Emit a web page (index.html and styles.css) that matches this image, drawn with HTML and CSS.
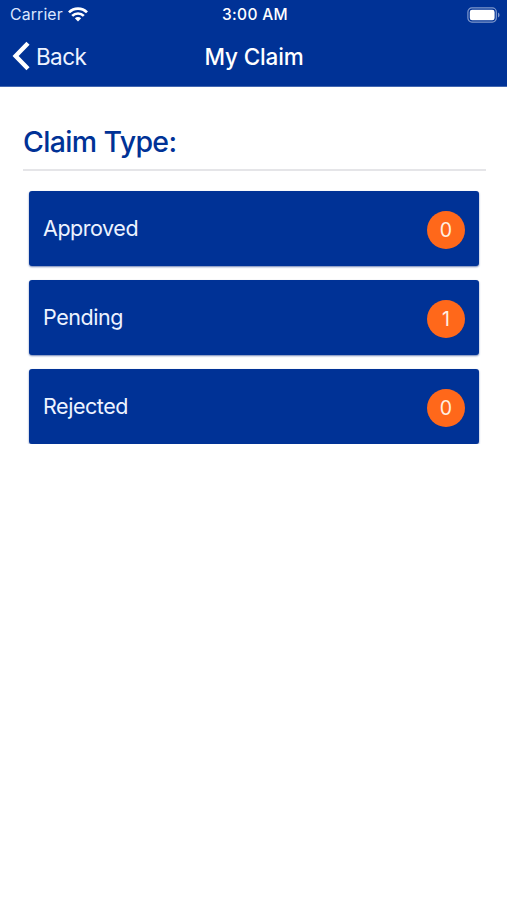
FILE: index.html
```html
<!DOCTYPE html>
<html lang="en">
<head>
<meta charset="utf-8">
<title>My Claim</title>
<link rel="stylesheet" href="styles.css">
</head>
<body>
<header class="header">
  <div class="status">
    <div class="carrier"><span class="carrier-name">Carrier</span>
      <svg class="wifi" width="20" height="15" viewBox="0 0 20 15"><g fill="none" stroke="#fff" stroke-width="2.7"><path d="M1 5.4C6 .4 14 .4 19 5.4"/><path d="M4.2 8.9C7.4 5.7 12.6 5.7 15.8 8.9"/></g><path fill="#fff" d="M6.8 11.3Q10 8.6 13.2 11.3L10 14.6Z"/></svg>
    </div>
    <time class="clock">3:00 AM</time>
    <svg class="battery" width="33" height="16" viewBox="0 0 33 16"><rect x=".9" y=".9" width="28.4" height="14.2" rx="4" fill="none" stroke="#7f98cc" stroke-width="1.2"/><rect x="2.8" y="2.8" width="24.8" height="10.4" rx="2.3" fill="#fff"/><path d="M31 5.6v4.8q1.6-.8 1.6-2.4T31 5.6Z" fill="#7f98cc"/></svg>
  </div>
  <nav class="nav">
    <a class="back"><svg class="chevron" width="18" height="30" viewBox="0 0 18 30"><path d="M16 2.2 3.6 15 16 27.8" fill="none" stroke="#fff" stroke-width="4.4"/></svg><span class="back-label">Back</span></a>
    <h1 class="title">My Claim</h1>
  </nav>
</header>
<main class="content">
  <h2 class="heading"><span>Claim Type:</span></h2>
  <ul class="list">
    <li class="card"><span class="label">Approved</span><span class="badge">0</span></li>
    <li class="card"><span class="label">Pending</span><span class="badge">1</span></li>
    <li class="card"><span class="label">Rejected</span><span class="badge">0</span></li>
  </ul>
</main>
</body>
</html>
```
FILE: styles.css
```css
* { box-sizing: border-box; }
body { margin: 0; background: #fff; font-family: Inter, "Liberation Sans", sans-serif; }
svg { display: block; flex: none; }
.header { height: 87px; background: #003296; border-bottom: 1px solid #4267b0; color: #fff; }
.status { display: grid; grid-template-columns: 1fr auto 1fr; align-items: center; height: 29px; padding: 0 7px 0 10px; }
.carrier { display: flex; align-items: center; gap: 5px; font-size: 15.8px; letter-spacing: .15px; color: #dbe6ff; }
.clock { font-size: 15.5px; font-weight: 500; letter-spacing: .35px; }
.battery { justify-self: end; }
.nav { display: grid; grid-template-columns: 1fr auto 1fr; align-items: center; height: 54px; padding: 0 11px 0 12px; }
.back { display: flex; align-items: center; gap: 6px; font-size: 22.5px; letter-spacing: -.6px; color: #edf3ff; }
.title { margin: 0; font-size: 22.5px; font-weight: 550; letter-spacing: -.15px; }
.content { padding: 35px 21px 0 23px; }
.heading { margin: 0; height: 49px; border-bottom: 2px solid #e5e5e8; color: #003296; font-size: 28.5px; line-height: 40px; font-weight: 480; letter-spacing: -.65px; }
.list { list-style: none; margin: 0; padding: 20px 7px 0 6px; display: flex; flex-direction: column; gap: 14px; }
.card { display: flex; justify-content: space-between; align-items: center; height: 75px; padding: 3px 14px 0 14px; border-radius: 3px; background: #003296; box-shadow: 0 1px 2px #6f83b5; color: #edf3ff; }
.label { margin-top: -4px; font-size: 21.5px; line-height: 28px; letter-spacing: -.45px; }
.badge { display: flex; justify-content: center; align-items: center; width: 38px; height: 38px; border-radius: 50%; background: #ff681a; font-size: 19.5px; color: #fff0e2; }
```
